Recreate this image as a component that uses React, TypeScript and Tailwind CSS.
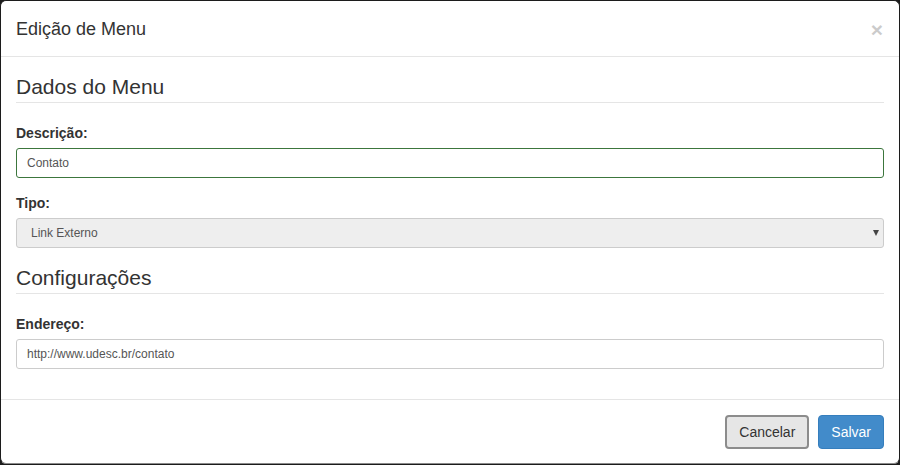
import React from 'react';

const font = "font-['Liberation_Sans',Arial,sans-serif]";

function Legend({ children }: { children: React.ReactNode }) {
  return (
    <div className="mb-5 h-[31px] border-b border-[#e5e5e5] text-[21px] leading-[30px] text-[#333]">
      {children}
    </div>
  );
}

function Label({ children }: { children: React.ReactNode }) {
  return <div className="mb-[5px] text-[14px] font-bold leading-5 text-[#333]">{children}</div>;
}

export default function App() {
  return (
    <div className={`${font} h-[465px] w-[900px] bg-[#1c1c1c]`}>
      <div className="flex h-[464px] w-[900px] flex-col rounded-[6px] border border-[#1c1c1c] border-b-[#8a8a8a] bg-white">
        <div className="flex h-[56px] shrink-0 items-center justify-between border-b border-[#e5e5e5] px-[15px] pt-px">
          <h4 className="text-[18px] leading-[26px] text-[#333]">Edição de Menu</h4>
          <button className="mr-[1px] text-[21px] font-bold leading-none text-black opacity-20">×</button>
        </div>

        <div className="px-[15px] pt-[15px] pb-[15px]">
          <Legend>Dados do Menu</Legend>

          <div className="mb-[15px]">
            <Label>Descrição:</Label>
            <input
              defaultValue="Contato"
              className="h-[30px] w-full rounded-[3px] border border-[#3c763d] px-[10px] text-[12px] text-[#555] outline-none"
            />
          </div>

          <div className="mb-[15px]">
            <Label>Tipo:</Label>
            <div className="relative">
              <select
                disabled
                className="h-[30px] w-full appearance-none rounded-[3px] border border-[#ccc] bg-[#eee] pl-[14px] text-[12px] text-[#555] outline-none"
              >
                <option>Link Externo</option>
              </select>
              <span className="pointer-events-none absolute right-[5px] top-[12px] h-0 w-0 border-x-[3.5px] border-t-[6px] border-x-transparent border-t-[#444]" />
            </div>
          </div>

          <Legend>Configurações</Legend>

          <div className="mb-[15px]">
            <Label>Endereço:</Label>
            <input
              defaultValue="http://www.udesc.br/contato"
              className="h-[30px] w-full rounded-[3px] border border-[#ccc] px-[10px] text-[12px] text-[#555] outline-none"
            />
          </div>
        </div>

        <div className="flex items-center justify-end gap-[9px] border-t border-[#e5e5e5] p-[15px]">
          <button className="h-[34px] rounded-[4px] border-2 border-[#8c8c8c] bg-[#e6e6e6] px-[12px] text-[14px] text-[#333]">
            Cancelar
          </button>
          <button className="h-[34px] rounded-[4px] border border-[#357ebd] bg-[#428bca] px-[12px] text-[14px] text-white">
            Salvar
          </button>
        </div>
      </div>
    </div>
  );
}
